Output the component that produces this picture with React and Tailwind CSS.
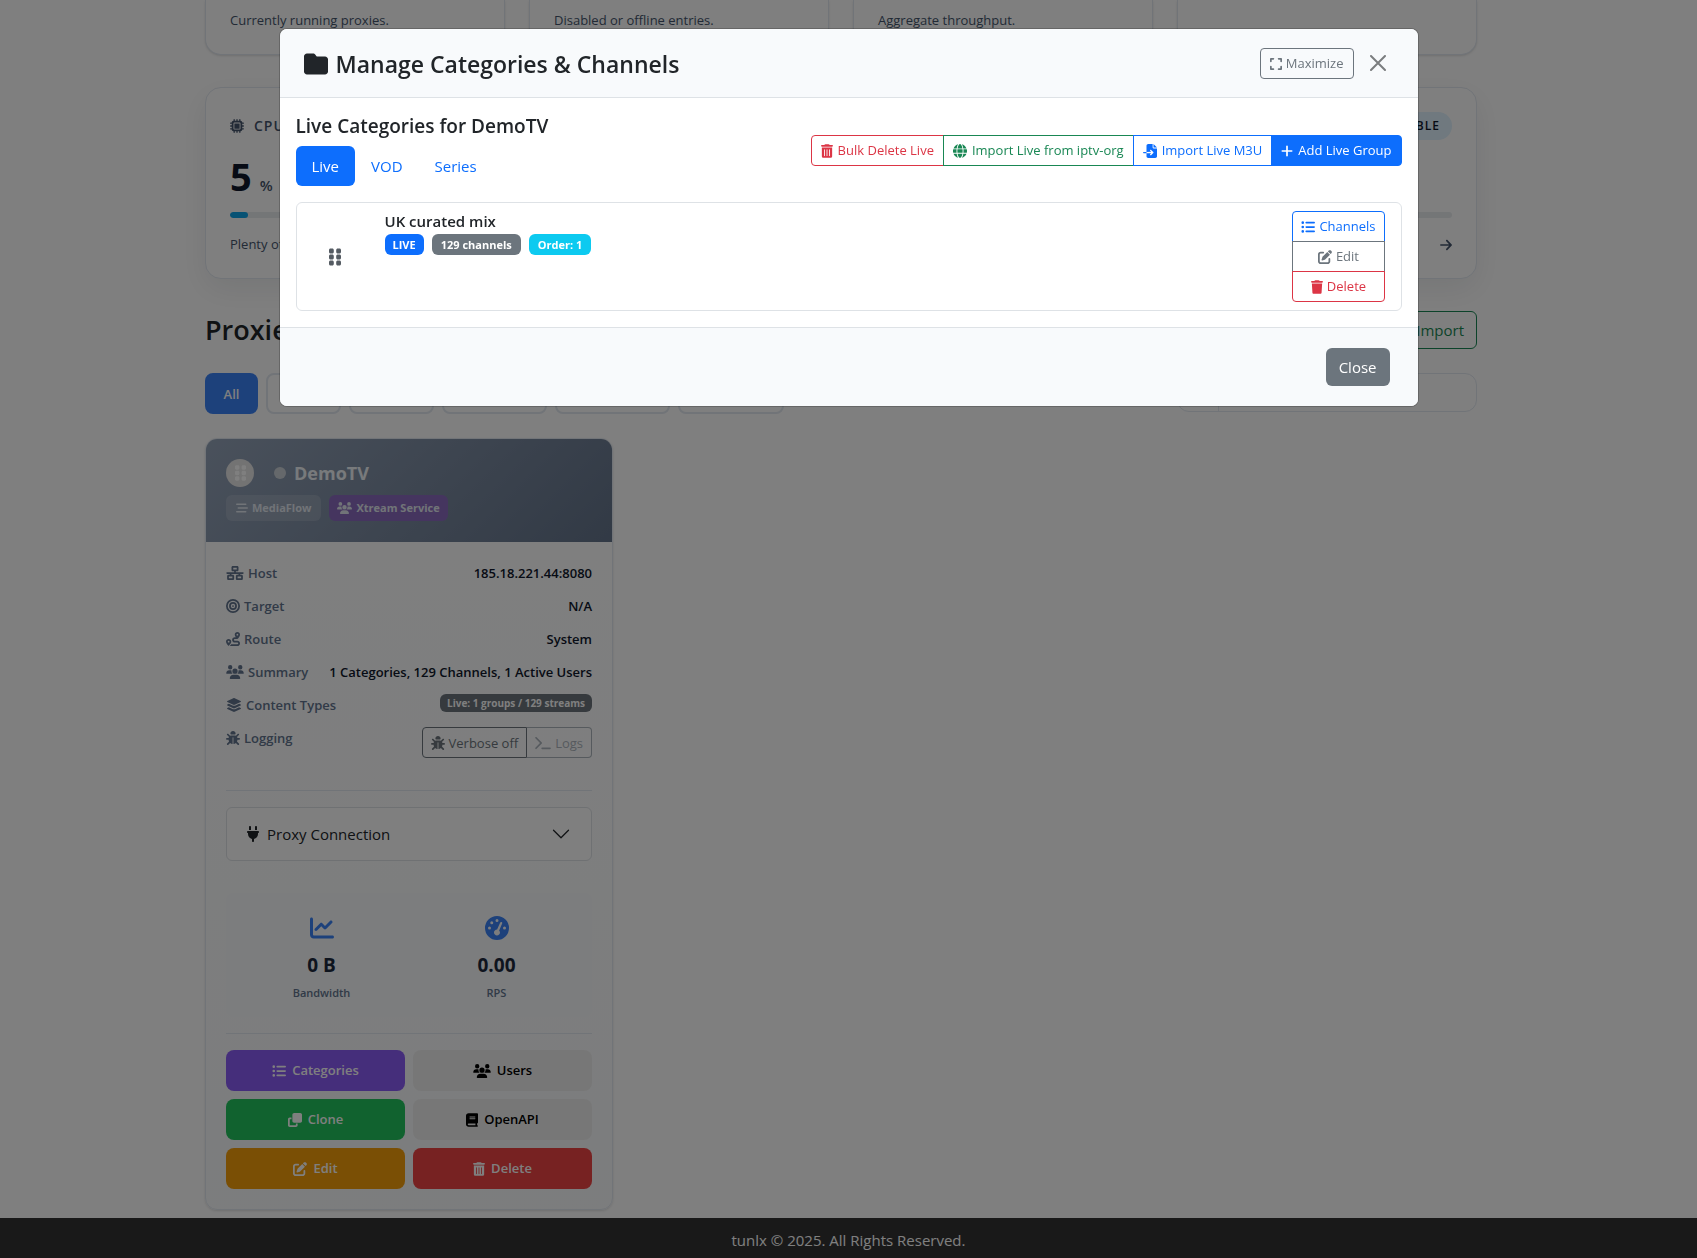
import {
  FaArrowRight,
  FaBarsStaggered,
  FaBook,
  FaBug,
  FaBullseye,
  FaChartLine,
  FaClone,
  FaExpand,
  FaFileImport,
  FaFolder,
  FaGaugeHigh,
  FaGlobe,
  FaGripVertical,
  FaLayerGroup,
  FaListUl,
  FaMicrochip,
  FaNetworkWired,
  FaPenToSquare,
  FaPlug,
  FaPlus,
  FaRoute,
  FaTerminal,
  FaTrash,
  FaTrashCan,
  FaUsers,
} from 'react-icons/fa6';

const stats = ['Currently running proxies.', 'Disabled or offline entries.', 'Aggregate throughput.', ''];

const filters = [
  { label: 'Live', width: 'w-[75px]' },
  { label: 'Active', width: 'w-[85px]' },
  { label: 'Inactive', width: 'w-[105px]' },
  { label: 'MediaFlow', width: 'w-[115px]' },
  { label: 'Xtream', width: 'w-[106px]' },
];

const details = [
  { icon: FaNetworkWired, size: 'w-[18px]', label: 'Host', value: '185.18.221.44:8080' },
  { icon: FaBullseye, size: 'w-3.5', label: 'Target', value: 'N/A' },
  { icon: FaRoute, size: 'w-3.5', label: 'Route', value: 'System' },
  { icon: FaUsers, size: 'w-[18px]', label: 'Summary', value: '1 Categories, 129 Channels, 1 Active Users' },
];

const actions = [
  { icon: FaListUl, size: 'w-3.5', label: 'Categories', color: 'bg-[#8b5cf6] text-white' },
  { icon: FaUsers, size: 'w-[18px]', label: 'Users', color: 'bg-[#efefef] text-black' },
  { icon: FaClone, size: 'w-3.5', label: 'Clone', color: 'bg-[#22c55e] text-white' },
  { icon: FaBook, size: 'w-3', label: 'OpenAPI', color: 'bg-[#efefef] text-black' },
  { icon: FaPenToSquare, size: 'w-3.5', label: 'Edit', color: 'bg-[#f59e0b] text-white' },
  { icon: FaTrashCan, size: 'w-3', label: 'Delete', color: 'bg-[#ef4444] text-white' },
];

const groupActions = [
  { icon: FaTrashCan, size: 'w-3', label: 'Bulk Delete Live', color: 'border-[#dc3545] text-[#dc3545]' },
  { icon: FaGlobe, size: 'w-3.5', label: 'Import Live from iptv-org', color: 'border-[#198754] text-[#198754]' },
  { icon: FaFileImport, size: 'w-3.5', label: 'Import Live M3U', color: 'border-[#0d6efd] text-[#0d6efd]' },
  { icon: FaPlus, size: 'w-3', label: 'Add Live Group', color: 'border-[#0d6efd] bg-[#0d6efd] text-white' },
];

const rowActions = [
  { icon: FaListUl, size: 'w-3.5', label: 'Channels', color: 'border-[#0d6efd] text-[#0d6efd]' },
  { icon: FaPenToSquare, size: 'w-3.5', label: 'Edit', color: 'border-[#6c757d] text-[#6c757d]' },
  { icon: FaTrash, size: 'w-3', label: 'Delete', color: 'border-[#dc3545] text-[#dc3545]' },
];

function DetailRow({ icon: Icon, size, label, children }) {
  return (
    <div className="flex h-[33px] items-start justify-between">
      <span className="flex items-center gap-1 text-slate-500">
        <Icon className={`h-3.5 ${size}`} />
        {label}
      </span>
      {children}
    </div>
  );
}

function ResourceCard({ title, value, note, badge }) {
  return (
    <div className="rounded-2xl border border-slate-200 bg-white p-6 shadow-[0_10px_30px_rgba(15,23,42,0.08)]">
      <div className="flex h-7 items-center justify-between">
        <span className="flex items-center gap-2.5 text-sm font-semibold tracking-[1px] text-slate-600">
          <FaMicrochip className="size-3.5" />
          {title}
        </span>
        {badge && (
          <span className="rounded-full bg-[#e0f2fe] px-3 text-xs leading-7 font-semibold tracking-[1px] text-slate-900">
            {badge}
          </span>
        )}
      </div>
      <div className="mt-4 flex h-10 items-baseline gap-2 leading-10">
        <span className="text-[38px] font-bold text-slate-900">{value}</span>
        <span className="text-[15px] font-semibold text-slate-600">%</span>
      </div>
      <div className="mt-4 h-1.5 overflow-hidden rounded-full bg-[#e9ecef]">
        <div className="h-full rounded-full bg-[#0ea5e9]" style={{ width: `${value}%` }} />
      </div>
      <div className="mt-4 flex h-5 items-center justify-between pt-0.5 text-[13px] text-slate-600">
        {note}
        <FaArrowRight className="ml-auto h-3.5 w-3" />
      </div>
    </div>
  );
}

function ProxyCard() {
  return (
    <article className="overflow-hidden rounded-xl border border-slate-200 bg-linear-to-b from-white to-slate-50 shadow-sm">
      <header className="h-[103px] bg-linear-135 from-[#94a3b8] to-[#64748b] p-5">
        <div className="flex items-center text-white">
          <span className="flex size-7 items-center justify-center rounded-full bg-[#e6e6e6] text-white">
            <FaGripVertical className="h-[18px] w-[11px]" />
          </span>
          <span className="ml-5 size-3 rounded-full bg-[#cbd0d6]" />
          <h3 className="ml-2 text-lg leading-7 font-bold text-slate-100">DemoTV</h3>
        </div>
        <div className="mt-2 flex gap-2 text-[11px] leading-[26px] font-bold text-slate-200">
          <span className="flex items-center gap-1 rounded-md bg-white/15 px-2.5">
            <FaBarsStaggered className="size-3" />
            MediaFlow
          </span>
          <span className="flex items-center gap-1 rounded-md bg-[#8b6bbf] px-2">
            <FaUsers className="h-3 w-[15px]" />
            Xtream Service
          </span>
        </div>
      </header>

      <div className="p-5">
        <div className="text-[13px] leading-[22px] font-semibold">
          {details.map((row) => (
            <DetailRow key={row.label} icon={row.icon} size={row.size} label={row.label}>
              <span className="text-slate-900">{row.value}</span>
            </DetailRow>
          ))}
          <DetailRow icon={FaLayerGroup} size="w-4" label="Content Types">
            <span className="rounded-md bg-[#6c757d] px-[7px] text-[10px] leading-[18px] font-bold text-white">
              Live: 1 groups / 129 streams
            </span>
          </DetailRow>
          <DetailRow icon={FaBug} size="w-3.5" label="Logging">
            <span className="flex text-[13px] font-normal">
              <button className="flex h-[31px] items-center gap-1 rounded-l border border-[#6c757d] px-2 text-[#6c757d]">
                <FaBug className="size-3.5" />
                Verbose off
              </button>
              <button className="flex h-[31px] items-center gap-1 rounded-r border border-l-0 border-[#adb5bd] px-2 text-[#adb5bd]">
                <FaTerminal className="h-3.5 w-4" />
                Logs
              </button>
            </span>
          </DetailRow>
        </div>

        <div className="mt-[30px] border-t border-slate-200 pt-4">
          <button className="flex h-[54px] w-full items-center gap-2 rounded-md border border-[#dee2e6] bg-white px-5 text-[15px] text-[#212529]">
            <FaPlug className="h-4 w-3" />
            Proxy Connection
            <svg className="ml-auto size-5" viewBox="0 0 16 16" fill="none" stroke="currentColor" strokeLinecap="round" strokeLinejoin="round">
              <path d="M2 5l6 6 6-6" />
            </svg>
          </button>
        </div>

        <div className="mt-8 grid h-[124px] grid-cols-2 gap-4 rounded-lg bg-[#f8fafc] px-4 pt-[23px] text-center">
          <div className="flex flex-col items-center">
            <FaChartLine className="size-6 text-[#3b82f6]" />
            <strong className="mt-[11px] text-[19px] leading-7 font-bold text-slate-800">0 B</strong>
            <span className="mt-1 text-[11px] leading-5 font-semibold text-slate-500">Bandwidth</span>
          </div>
          <div className="flex flex-col items-center">
            <FaGaugeHigh className="size-6 text-[#3b82f6]" />
            <strong className="mt-[11px] text-[19px] leading-7 font-bold text-slate-800">0.00</strong>
            <span className="mt-1 text-[11px] leading-5 font-semibold text-slate-500">RPS</span>
          </div>
        </div>

        <div className="mt-4 grid grid-cols-2 gap-2 border-t border-slate-200 pt-4">
          {actions.map(({ icon: Icon, size, label, color }) => (
            <button key={label} className={`flex h-[41px] items-center justify-center gap-1.5 rounded-lg text-[13px] font-semibold ${color}`}>
              <Icon className={`h-3.5 ${size}`} />
              {label}
            </button>
          ))}
        </div>
      </div>
    </article>
  );
}

function CategoriesModal() {
  return (
    <div className="fixed inset-0 bg-black/50">
      <div
        role="dialog"
        aria-labelledby="modal-title"
        className="mx-auto mt-7 max-w-[1140px] overflow-hidden rounded-lg border border-black/20 bg-white bg-clip-padding"
      >
        <header className="flex h-[69px] items-center border-b border-[#dee2e6] bg-[#f8fafc] px-6">
          <h2 id="modal-title" className="flex items-center gap-2 pt-0.5 text-[23px] font-semibold">
            <FaFolder className="size-6" />
            Manage Categories &amp; Channels
          </h2>
          <button className="ml-auto flex h-[31px] items-center gap-1 rounded border border-[#6c757d] px-[9px] pt-0.5 text-[13px] text-[#6c757d]">
            <FaExpand className="h-3.5 w-3" />
            Maximize
          </button>
          <button aria-label="Close" className="ml-4 text-[#7b7d7f]">
            <svg className="mr-2 size-4" viewBox="0 0 16 16" fill="none" stroke="currentColor" strokeWidth="2" strokeLinecap="round">
              <path d="M1 1l14 14M15 1L1 15" />
            </svg>
          </button>
        </header>

        <div className="p-4">
          <div className="flex items-center justify-between">
            <div>
              <h3 className="text-[19px] leading-6 font-semibold">Live Categories for DemoTV</h3>
              <nav className="mt-2 flex text-[15px] leading-6 text-[#0d6efd]">
                <a href="#live" className="rounded-md bg-[#0d6efd] px-4 py-2 text-white">Live</a>
                <a href="#vod" className="px-4 py-2">VOD</a>
                <a href="#series" className="px-4 py-2">Series</a>
              </nav>
            </div>
            <div className="flex">
              {groupActions.map(({ icon: Icon, size, label, color }) => (
                <button
                  key={label}
                  className={`-ml-px flex h-[31px] items-center gap-[5px] border px-[9px] pt-0.5 text-[13px] first:rounded-l last:rounded-r ${color}`}
                >
                  <Icon className={`h-3.5 ${size}`} />
                  {label}
                </button>
              ))}
            </div>
          </div>

          <div className="mt-4 flex rounded-md border border-[#dee2e6] px-4 py-2">
            <div className="flex w-[72px] items-center pl-4 text-[#545b62]">
              <FaGripVertical className="h-5 w-3" />
            </div>
            <div className="flex-1">
              <h4 className="text-[15px] leading-5 font-semibold">UK curated mix</h4>
              <div className="mt-[3px] flex gap-2 text-[11px] leading-[21px] font-bold text-white">
                <span className="rounded-md bg-[#0d6efd] px-2">LIVE</span>
                <span className="rounded-md bg-[#6c757d] px-[9px]">129 channels</span>
                <span className="rounded-md bg-[#0dcaf0] px-[9px]">Order: 1</span>
              </div>
            </div>
            <div className="flex flex-col pt-px">
              {rowActions.map(({ icon: Icon, size, label, color }) => (
                <button
                  key={label}
                  className={`-mt-px flex h-[31px] items-center justify-center gap-1 border px-2 text-[13px] first:rounded-t last:rounded-b ${color}`}
                >
                  <Icon className={`h-3.5 ${size}`} />
                  {label}
                </button>
              ))}
            </div>
          </div>
        </div>

        <footer className="flex h-[79px] items-center justify-end border-t border-[#dee2e6] bg-[#f8fafc] px-7">
          <button className="h-[38px] rounded-md bg-[#6c757d] px-[13px] text-[15px] text-white">Close</button>
        </footer>
      </div>
    </div>
  );
}

export default function App() {
  return (
    <div className="flex h-screen flex-col overflow-hidden bg-white font-['Open_Sans',sans-serif] text-[#212529]">
      <main className="flex-1 pr-[15px]">
        <div className="mx-auto max-w-[1272px]">
          <div className="grid grid-cols-4 gap-6">
            {stats.map((text) => (
              <div key={text} className="h-[55px] rounded-b-2xl border border-t-0 border-slate-200 bg-white px-6 pt-2.5 text-[13px] leading-5 text-slate-600 shadow-sm">
                {text}
              </div>
            ))}
          </div>

          <div className="mt-8 grid grid-cols-3 gap-6">
            <ResourceCard title="CPU" value={5} note="Plenty of headroom" />
            <ResourceCard value={5} />
            <ResourceCard value={5} badge="STABLE" />
          </div>

          <div className="mt-8 flex h-[38px] items-center justify-between">
            <h2 className="text-[27px] font-semibold">Proxies</h2>
            <button className="h-[38px] rounded-md border border-[#198754] px-3 text-[15px] text-[#198754]">Import</button>
          </div>

          <div className="mt-6 flex items-start gap-2 text-[13px] font-semibold">
            <button className="h-[41px] w-[53px] rounded-lg bg-[#3b82f6] pt-0.5 text-white">All</button>
            {filters.map(({ label, width }) => (
              <button key={label} className={`h-[41px] rounded-lg border-2 border-slate-200 text-slate-500 ${width}`}>
                {label}
              </button>
            ))}
            <label className="ml-auto flex h-[39px] w-[300px] rounded-xl border border-slate-200">
              <span className="w-[41px] border-r border-slate-200" />
              <input aria-label="Search proxies" className="min-w-0 flex-1 px-3" />
            </label>
          </div>

          <div className="mt-6 grid grid-cols-3 gap-6">
            <ProxyCard />
          </div>
        </div>
      </main>
      <footer className="h-10 bg-[#333333] text-center text-[15px] leading-[44px] text-white">
        tunlx © 2025. All Rights Reserved.
      </footer>
      <CategoriesModal />
    </div>
  );
}
